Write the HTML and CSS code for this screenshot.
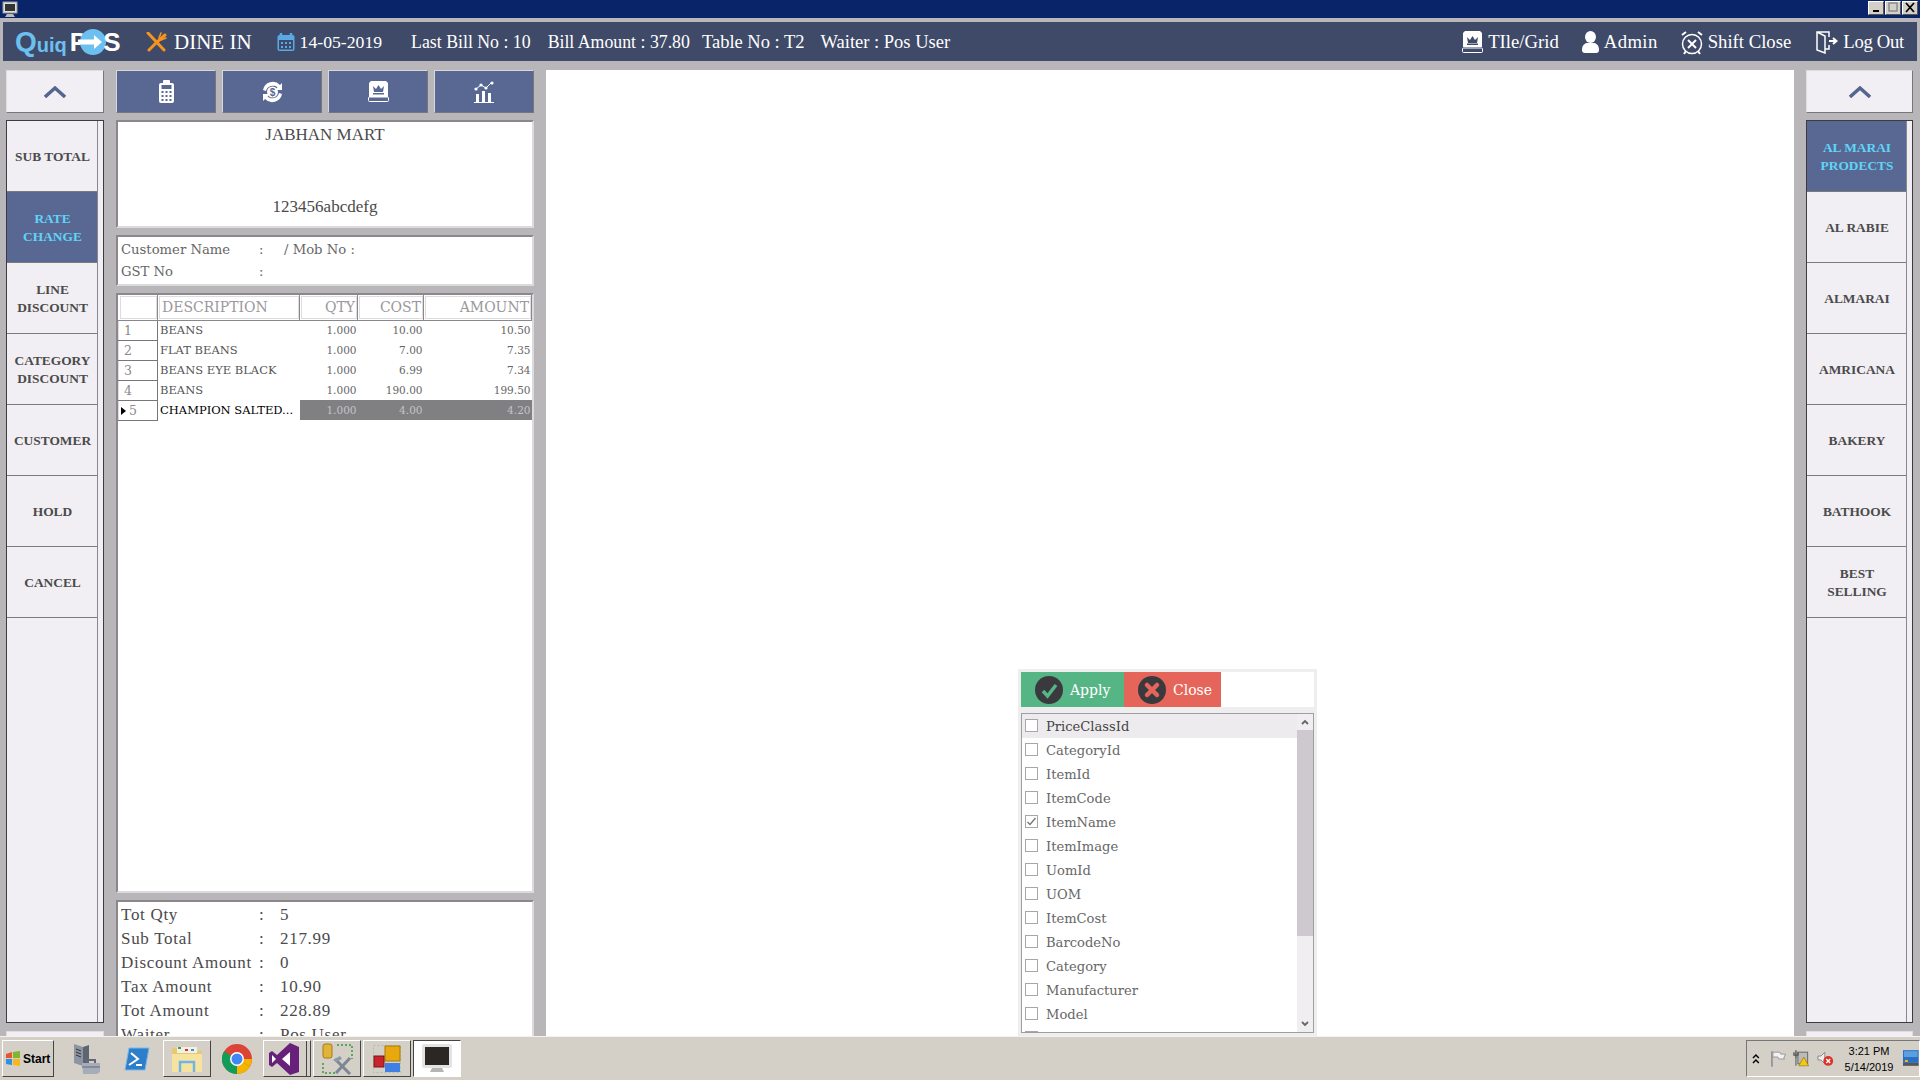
FILE: index.html
```html
<!DOCTYPE html>
<html lang="en">
<head>
    <meta charset="UTF-8">
    <title>QuiqPOS</title>
    <link rel="stylesheet" href="styles.css">
</head>
<body>
    <div class="titlebar">
        <svg class="title-icon" width="16" height="17" viewBox="0 0 16 17"><rect x="1" y="1" width="14" height="11" fill="#ddd" stroke="#999"/><rect x="3" y="3" width="10" height="7" fill="#333"/><path d="M5 13h6l2 3H3z" fill="#bbb"/></svg>
        <div class="win-buttons">
            <span class="win-btn"><svg width="14" height="11" viewBox="0 0 14 11"><rect x="4" y="8" width="6" height="2" fill="#000"/></svg></span>
            <span class="win-btn"><svg width="14" height="11" viewBox="0 0 14 11"><rect x="3" y="1" width="8" height="8" fill="none" stroke="#888" stroke-width="1.4"/></svg></span>
            <span class="win-btn"><svg width="14" height="11" viewBox="0 0 14 11"><path d="M3 1l8 9M11 1l-8 9" stroke="#000" stroke-width="1.8"/></svg></span>
        </div>
    </div>

    <header class="app-header">
        <div class="logo">
            <span class="logo-q">Q</span><span class="logo-uiq">uiq</span><span class="logo-pos">P</span>
            <svg class="logo-o" width="30" height="26" viewBox="0 0 30 26"><circle cx="15" cy="13" r="13" fill="#6cc0f0"/><path d="M0 10.500h16V6l8 7-8 7v-4.500H0z" fill="#fff"/></svg>
            <span class="logo-pos">S</span>
        </div>
        <svg class="mode-icon" width="21" height="20" viewBox="0 0 21 20" fill="none" stroke="#f7941e" stroke-width="3" stroke-linecap="round"><path d="M2 1l16 17"/><path d="M19 3l-8 7-8 8"/><path d="M15 1l-2 5M20 6l-5 2" stroke-width="1.6"/></svg>
        <span class="mode-label">DINE IN</span>
        <svg class="date-icon" width="18" height="18" viewBox="0 0 18 18"><rect x="0.500" y="2" width="17" height="16" rx="2" fill="#5aa9e6"/><rect x="2" y="7" width="14" height="9.500" fill="#3f4a68"/><path d="M4 0v4M14 0v4" stroke="#5aa9e6" stroke-width="2.500"/><path d="M4 9h2v2H4zM8 9h2v2H8zM12 9h2v2h-2zM4 13h2v2H4zM8 13h2v2H8zM12 13h2v2h-2z" fill="#5aa9e6"/></svg>
        <span class="head-date">14-05-2019</span>
        <span class="head-info first">Last Bill No : 10</span>
        <span class="head-info bill-amount">Bill Amount : 37.80</span>
        <span class="head-info table-no">Table No : T2</span>
        <span class="head-info waiter">Waiter : Pos User</span>

        <div class="head-actions">
            <span class="head-action">
                <svg width="21" height="22" viewBox="0 0 21 22"><path d="M3 0h15l2 2v14H1V2z" fill="#fff"/><path d="M5 6l3 3 2.500-4 2.500 4 3-3-1 6H6z" fill="#3f4a68"/><rect x="5" y="12.500" width="11" height="1.500" fill="#3f4a68"/><rect x="0.500" y="17" width="20" height="4.500" rx="1" fill="#3f4a68" stroke="#fff"/></svg>
                TIle/Grid
            </span>
            <span class="head-action admin">
                <svg width="17" height="22" viewBox="0 0 17 22" fill="#fff"><ellipse cx="8.500" cy="6" rx="5.500" ry="6"/><path d="M0 19c0-5 3-7 5-7h7c2 0 5 2 5 7 0 2-1 3-3 3H3c-2 0-3-1-3-3z"/></svg>
                Admin
            </span>
            <span class="head-action">
                <svg width="22" height="25" viewBox="0 0 22 25" fill="none" stroke="#fff"><circle cx="11" cy="14" r="9.500" stroke-width="1.500"/><path d="M7 10l8 8M15 10l-8 8" stroke-width="2"/><path d="M1 5l4-3M21 5l-4-3M3 24l2-3M19 24l-2-3" stroke-width="2"/></svg>
                Shift Close
            </span>
            <span class="head-action logout">
                <svg width="22" height="23" viewBox="0 0 22 23" fill="none" stroke="#fff" stroke-width="1.500"><path d="M13 6V1H1v18l8 3V5L1 1"/><path d="M9 18h4v-4"/><path d="M13 10h7M17 7l3.500 3-3.500 3" stroke-width="2"/></svg>
                Log Out
            </span>
        </div>
    </header>

    <div class="workspace">
        <!-- left rail -->
        <aside class="rail">
            <button class="up-btn"><svg width="22" height="12" viewBox="0 0 22 12" fill="none" stroke="#56658f" stroke-width="3.400"><path d="M1 11l10-9 10 9"/></svg></button>
            <div class="rail-list">
                <div class="rail-items">
                    <div class="rail-item">SUB TOTAL</div>
                    <div class="rail-item active">RATE<br>CHANGE</div>
                    <div class="rail-item">LINE<br>DISCOUNT</div>
                    <div class="rail-item">CATEGORY<br>DISCOUNT</div>
                    <div class="rail-item">CUSTOMER</div>
                    <div class="rail-item">HOLD</div>
                    <div class="rail-item">CANCEL</div>
                </div>
            </div>
            <div class="rail-stub"></div>
        </aside>

        <!-- bill column -->
        <section class="bill">
            <div class="tool-row">
                <button class="tool-btn"><svg width="15" height="23" viewBox="0 0 15 23"><rect x="0" y="3" width="15" height="20" rx="2" fill="#fff"/><rect x="4" y="0" width="7" height="4" rx="1" fill="#fff"/><rect x="2.500" y="5" width="10" height="4" fill="#596892"/><path d="M2.500 11h2v2h-2zM6.500 11h2v2h-2zM10.500 11h2v2h-2zM2.500 15h2v2h-2zM6.500 15h2v2h-2zM10.500 15h2v2h-2zM2.500 19h2v2h-2zM6.500 19h2v2h-2zM10.500 19h2v2h-2z" fill="#596892"/></svg></button>
                <button class="tool-btn"><svg width="25" height="22" viewBox="0 0 25 22"><path d="M3 9a10 10 0 0 1 17-5l2-2v7h-7l2.500-2.500A7 7 0 0 0 6 10zM22 13a10 10 0 0 1-17 5l-2 2v-7h7l-2.500 2.500A7 7 0 0 0 19 12z" fill="#fff"/><circle cx="12.500" cy="11" r="5.500" fill="#fff"/><text x="12.500" y="14.500" text-anchor="middle" class="dollar">$</text></svg></button>
                <button class="tool-btn"><svg width="21" height="21" viewBox="0 0 21 21"><path d="M3 0h15l2 2v14H1V2z" fill="#fff"/><path d="M5 5l3 3 2.500-4 2.500 4 3-3-1 6H6z" fill="#596892"/><rect x="5" y="12" width="11" height="1.500" fill="#596892"/><rect x="0.500" y="16" width="20" height="4.500" rx="1" fill="#596892" stroke="#fff"/></svg></button>
                <button class="tool-btn"><svg width="22" height="22" viewBox="0 0 22 22"><path d="M3 13h3v8H3zM9 10h3v11H9zM15 12h3v9h-3zM1 21h20v1H1z" fill="#fff"/><path d="M3 8l5-4 5 3 6-6" fill="none" stroke="#fff"/><circle cx="3" cy="8" r="1.600" fill="#fff"/><circle cx="8" cy="4" r="1.600" fill="#fff"/><circle cx="13" cy="7" r="1.600" fill="#fff"/><circle cx="19" cy="2" r="1.600" fill="#fff"/></svg></button>
            </div>

            <div class="box shop-box">
                <div>JABHAN MART</div>
                <div>123456abcdefg</div>
            </div>

            <div class="box customer-box">
                <span>Customer Name</span><span>:</span><span>/ Mob No :</span>
                <span>GST No</span><span>:</span><span></span>
            </div>

            <div class="box grid-box">
                <table class="items">
                    <thead>
                        <tr>
                            <th class="row-head"></th>
                            <th class="desc">DESCRIPTION</th>
                            <th>QTY</th>
                            <th>COST</th>
                            <th>AMOUNT</th>
                        </tr>
                    </thead>
                    <tbody>
                        <tr><td class="row-head">1</td><td class="desc">BEANS</td><td>1.000</td><td>10.00</td><td>10.50</td></tr>
                        <tr><td class="row-head">2</td><td class="desc">FLAT BEANS</td><td>1.000</td><td>7.00</td><td>7.35</td></tr>
                        <tr><td class="row-head">3</td><td class="desc">BEANS EYE BLACK</td><td>1.000</td><td>6.99</td><td>7.34</td></tr>
                        <tr><td class="row-head">4</td><td class="desc">BEANS</td><td>1.000</td><td>190.00</td><td>199.50</td></tr>
                        <tr class="selected"><td class="row-head"><span class="row-mark"></span>5</td><td class="desc">CHAMPION SALTED...</td><td>1.000</td><td>4.00</td><td>4.20</td></tr>
                    </tbody>
                </table>
            </div>

            <div class="box totals-box">
                <span>Tot Qty</span><span>:</span><span>5</span>
                <span>Sub Total</span><span>:</span><span>217.99</span>
                <span>Discount Amount</span><span>:</span><span>0</span>
                <span>Tax Amount</span><span>:</span><span>10.90</span>
                <span>Tot Amount</span><span>:</span><span>228.89</span>
                <span>Waiter</span><span>:</span><span>Pos User</span>
            </div>
        </section>

        <!-- main area with the column chooser popup -->
        <main class="canvas">
            <div class="chooser">
                <div class="chooser-bar">
                    <button class="chooser-btn apply">
                        <svg width="28" height="28" viewBox="0 0 28 28"><circle cx="14" cy="14" r="14" fill="#3a3a3e"/><path d="M8 15l4.500 5L21 9" fill="none" stroke="#55b585" stroke-width="3.500"/></svg>
                        Apply
                    </button>
                    <button class="chooser-btn close">
                        <svg width="28" height="28" viewBox="0 0 28 28"><circle cx="14" cy="14" r="14" fill="#3a3a3e"/><path d="M9 9l10 10M19 9L9 19" stroke="#e6655a" stroke-width="4.500" stroke-linecap="round"/></svg>
                        Close
                    </button>
                </div>
                <div class="chooser-list">
                    <ul class="col-list">
                        <li class="hover"><span class="check"></span>PriceClassId</li>
                        <li><span class="check"></span>CategoryId</li>
                        <li><span class="check"></span>ItemId</li>
                        <li><span class="check"></span>ItemCode</li>
                        <li><span class="check"><svg width="11" height="11" viewBox="0 0 11 11"><path d="M1.500 6l2.500 2.500L9.500 2" fill="none" stroke="#777" stroke-width="1.400"/></svg></span>ItemName</li>
                        <li><span class="check"></span>ItemImage</li>
                        <li><span class="check"></span>UomId</li>
                        <li><span class="check"></span>UOM</li>
                        <li><span class="check"></span>ItemCost</li>
                        <li><span class="check"></span>BarcodeNo</li>
                        <li><span class="check"></span>Category</li>
                        <li><span class="check"></span>Manufacturer</li>
                        <li><span class="check"></span>Model</li>
                        <li><span class="check"></span></li>
                    </ul>
                    <div class="scrollbar">
                        <span class="scroll-arrow"><svg width="8" height="6" viewBox="0 0 8 6" fill="none" stroke="#666" stroke-width="1.800"><path d="M1 5l3-3 3 3"/></svg></span>
                        <span class="scroll-thumb"></span>
                        <span class="scroll-track"></span>
                        <span class="scroll-arrow"><svg width="8" height="6" viewBox="0 0 8 6" fill="none" stroke="#666" stroke-width="1.800"><path d="M1 1l3 3 3-3"/></svg></span>
                    </div>
                </div>
            </div>
        </main>

        <!-- right rail -->
        <aside class="rail">
            <button class="up-btn"><svg width="22" height="12" viewBox="0 0 22 12" fill="none" stroke="#56658f" stroke-width="3.400"><path d="M1 11l10-9 10 9"/></svg></button>
            <div class="rail-list">
                <div class="rail-items">
                    <div class="rail-item active">AL MARAI<br>PRODECTS</div>
                    <div class="rail-item">AL RABIE</div>
                    <div class="rail-item">ALMARAI</div>
                    <div class="rail-item">AMRICANA</div>
                    <div class="rail-item">BAKERY</div>
                    <div class="rail-item">BATHOOK</div>
                    <div class="rail-item">BEST<br>SELLING</div>
                </div>
            </div>
            <div class="rail-stub"></div>
        </aside>
    </div>

    <footer class="taskbar">
        <button class="start-btn">
            <svg width="16" height="15" viewBox="0 0 16 15"><path d="M1 3l6-2v6H1z" fill="#e8552b"/><path d="M8 1l7-1v7H8z" fill="#7cb82f"/><path d="M1 8h6v6l-6-1z" fill="#2f8fe0"/><path d="M8 8h7v7l-7-1z" fill="#f7b81e"/></svg>
            Start
        </button>
        <div class="task-slot">
            <svg width="28" height="32" viewBox="0 0 28 32"><path d="M1 1l9 3v19l-9-3z" fill="#8d95a3"/><path d="M10 4l6-2v19l-6 2z" fill="#5d6573"/><path d="M3 6l5 2M3 9l5 2M3 12l5 2" stroke="#333"/><path d="M9 20h18v9l-3 2H10z" fill="#a4adb8"/><path d="M9 24h18" stroke="#667"/><path d="M14 20v-3h8v3" fill="none" stroke="#667" stroke-width="2"/></svg>
        </div>
        <div class="task-slot">
            <svg width="26" height="24" viewBox="0 0 26 24"><path d="M5 1h20l-4 22H1z" fill="#2d7fc9" stroke="#7ab8ea"/><path d="M7 6l7 6-9 6" fill="none" stroke="#fff" stroke-width="2"/><path d="M12 18h6" stroke="#fff" stroke-width="2"/></svg>
        </div>
        <div class="task-slot raised">
            <svg width="32" height="30" viewBox="0 0 32 30"><path d="M1 4h11l3 3h16v21H1z" fill="#e8c873"/><rect x="6" y="3" width="20" height="6" fill="#f3f0e4"/><path d="M7 3h3v2H7z" fill="#3fa34d"/><path d="M14 5h3v2h-3z" fill="#d9332b"/><path d="M20 5h3v2h-3z" fill="#3f8fe0"/><path d="M1 10h30v18H1z" fill="#f7e3a0"/><path d="M9 28v-10h14v10M9 18h14" fill="none" stroke="#6fb6e8" stroke-width="2.500"/></svg>
        </div>
        <div class="task-slot">
            <svg width="30" height="32" viewBox="0 0 30 30"><circle cx="15" cy="15" r="15" fill="#db4437"/><path d="M15 15L2 22.500A15 15 0 0 0 15 30z" fill="#0f9d58"/><path d="M2 22.500A15 15 0 0 1 2 7.500L15 15z" fill="#0f9d58"/><path d="M15 15l13 7.500A15 15 0 0 1 15 30z" fill="#f4b400"/><path d="M15 15h15a15 15 0 0 1-2 7.500z" fill="#f4b400"/><circle cx="15" cy="15" r="7" fill="#fff"/><circle cx="15" cy="15" r="5.500" fill="#4285f4"/></svg>
        </div>
        <div class="task-slot raised double">
            <svg class="vs-icon" width="30" height="32" viewBox="0 0 30 32"><path d="M21 0l9 4v25l-9 3-13-12-5 4-3-2V10l3-2 5 4z" fill="#68217a"/><path d="M21 9v14l-8-7zM3 12l4 4-4 4z" fill="#fff"/></svg>
        </div>
        <div class="task-slot raised">
            <svg width="32" height="32" viewBox="0 0 32 32"><rect x="2" y="1" width="9" height="14" rx="2" fill="#e2b33a" stroke="#a67c12"/><path d="M16 2h15v14M2 20v10h14" fill="none" stroke="#5aa95a" stroke-width="2" stroke-dasharray="2 2"/><path d="M14 16l15 15M29 15L15 30" stroke="#7b8794" stroke-width="3"/><path d="M12 17l7-4 2 3-6 3z" fill="#8d99a6"/></svg>
        </div>
        <div class="task-slot raised">
            <svg width="28" height="28" viewBox="0 0 28 28"><rect x="0.500" y="0.500" width="27" height="27" fill="none" stroke="#a8c49a" stroke-dasharray="2 2"/><rect x="12" y="1" width="15" height="15" fill="#e7a90e" stroke="#a97808"/><rect x="1" y="11" width="10" height="11" fill="#c8242c" stroke="#7d1519"/><rect x="12" y="18" width="15" height="9" fill="#3f7fe6"/></svg>
        </div>
        <div class="task-slot active">
            <svg width="32" height="30" viewBox="0 0 32 30"><rect x="1" y="0" width="30" height="24" rx="2" fill="#e3e3e3"/><rect x="4" y="3" width="24" height="18" fill="#2a2725"/><path d="M11 24h10l2 4H9z" fill="#b5b5b5"/></svg>
        </div>

        <div class="tray">
            <svg class="tray-chevron" width="8" height="11" viewBox="0 0 8 11" fill="none" stroke="#000" stroke-width="1.500"><path d="M1 5l3-3 3 3M1 10l3-3 3 3"/></svg>
            <svg width="17" height="16" viewBox="0 0 17 16"><path d="M2 0v16" stroke="#888" stroke-width="1.500"/><path d="M3 1h7l1 2h5l-2 4 1 1H9L8 6H3z" fill="#f2f2f2" stroke="#999"/></svg>
            <svg width="17" height="17" viewBox="0 0 17 17"><rect x="5" y="2" width="10" height="12" fill="#bbb" stroke="#666"/><path d="M3 0v8M1 2v3h4V2" fill="none" stroke="#555" stroke-width="1.400"/><path d="M3 8v8" stroke="#555"/><path d="M11 7l5 9H6z" fill="#f6c90e" stroke="#8a7000" stroke-width="0.600"/></svg>
            <svg width="17" height="16" viewBox="0 0 17 16"><path d="M1 5h3l4-4v12L4 9H1z" fill="#eee" stroke="#888"/><circle cx="11.500" cy="10" r="5" fill="#d9332b"/><path d="M9.500 8l4 4M13.500 8l-4 4" stroke="#fff" stroke-width="1.400"/></svg>
            <div class="clock">
                <span>3:21 PM</span>
                <span>5/14/2019</span>
            </div>
            <svg class="show-desktop" width="16" height="17" viewBox="0 0 16 17"><rect width="16" height="13" fill="#2a6fc0"/><rect x="1" y="1" width="14" height="6" fill="#5aa0e0"/><rect y="13" width="16" height="3" fill="#555"/><rect x="2" y="10" width="3" height="2" fill="#f7b81e"/></svg>
        </div>
    </footer>
</body>
</html>
```
FILE: styles.css
```css
* {
    box-sizing: border-box;
}
html, body {
    margin: 0;
    height: 1080px;
    overflow: hidden;
}
body {
    background: #b8b6b9;
    font-family: "Liberation Serif", serif;
    color: #4b4a4c;
    display: flex;
    flex-direction: column;
}
button {
    font-family: inherit;
    padding: 0;
    cursor: pointer;
}

/* title bar */
.titlebar {
    height: 18px;
    background: #0a246a;
    display: flex;
    justify-content: space-between;
    align-items: flex-start;
    padding: 1px 2px 0 2px;
}
.win-buttons {
    display: flex;
    gap: 1px;
}
.win-btn {
    width: 16px;
    height: 14px;
    background: #d4d0c8;
    border: 1px solid;
    border-color: #fff #555 #555 #fff;
    display: flex;
}

/* header */
.app-header {
    height: 39px;
    margin: 4px 3px 9px 3px;
    background: #3f4a68;
    color: #fff;
    display: flex;
    align-items: center;
    padding: 1px 0 0 12px;
    font-size: 17.800px;
    white-space: nowrap;
}
.logo {
    display: flex;
    align-items: center;
    width: 107px;
    font-family: "Liberation Sans", sans-serif;
    font-weight: bold;
}
.logo-q {
    color: #6cc0f0;
    font-size: 28px;
}
.logo-uiq {
    color: #6cc0f0;
    font-size: 20px;
    margin-top: 6px;
}
.logo-pos {
    font-size: 26px;
    margin-left: 3px;
}
.logo-o {
    flex: none;
    margin: 0 -8px 0 -9px;
}
.mode-icon {
    flex: none;
    margin-left: 24px;
}
.mode-label {
    font-size: 21px;
    margin-left: 7px;
}
.date-icon {
    margin-left: 25px;
}
.head-date {
    margin-left: 5px;
    font-size: 17.700px;
}
.head-info {
    margin-left: 12px;
}
.head-info.first {
    margin-left: 29px;
}
.head-info.bill-amount {
    margin-left: 17px;
}
.head-info.table-no {
    font-size: 18.500px;
}
.head-info.waiter {
    margin-left: 16px;
    font-size: 18.500px;
}
.head-actions {
    margin-left: auto;
    display: flex;
    align-items: center;
    gap: 25px;
    padding-right: 13px;
    font-size: 18.700px;
}
.head-action {
    display: flex;
    align-items: center;
    gap: 5px;
}
.head-action.admin {
    letter-spacing: 0.400px;
    margin: 0 -2px;
}
.head-action.logout {
    letter-spacing: -0.300px;
}

/* main columns */
.workspace {
    flex: 1;
    min-height: 0;
    display: grid;
    grid-template-columns: 98px 418px 1248px 107px;
    column-gap: 12px;
    padding-left: 6px;
    overflow: hidden;
}
.rail {
    display: flex;
    flex-direction: column;
    gap: 7px;
    min-height: 0;
}
.up-btn {
    height: 43px;
    flex: none;
    background: #f1eff3;
    border: 1px solid;
    border-color: #dedcdf #77767a #77767a #dedcdf;
    display: flex;
    align-items: center;
    justify-content: center;
}
.rail-list {
    flex: none;
    height: 903px;
    background: #f1eff3;
    border: 1px solid #3c3b3e;
}
.rail-items {
    width: calc(100% - 5px);
    height: 100%;
    border-right: 1px solid #8a888c;
}
.rail-item {
    height: 71px;
    border-bottom: 1px solid #7b7a7e;
    display: flex;
    align-items: center;
    justify-content: center;
    text-align: center;
    padding: 2px 0 0 1px;
    font-size: 13.400px;
    font-weight: bold;
    line-height: 18px;
}
.rail-item.active {
    background: #596892;
    color: #5fd4f7;
}
.rail-stub {
    flex: none;
    height: 20px;
    margin-top: 1px;
    background: #f1eff3;
    border: 1px solid #dedcdf;
}

/* bill column */
.bill {
    display: flex;
    flex-direction: column;
    gap: 7px;
    min-height: 0;
}
.tool-row {
    flex: none;
    height: 43px;
    display: grid;
    grid-template-columns: repeat(4, 1fr);
    column-gap: 6px;
}
.tool-btn {
    background: #596892;
    border: 1px solid;
    border-color: #d8d8dc #77767a #77767a #d8d8dc;
    display: flex;
    align-items: center;
    justify-content: center;
}
.dollar {
    font-family: "Liberation Sans", sans-serif;
    font-size: 10px;
    font-weight: bold;
    fill: #596892;
}
.box {
    flex: none;
    background: #fff;
    border: 2px solid;
    border-color: #8a888b #dcdadc #dcdadc #8a888b;
}
.shop-box {
    height: 108px;
    display: flex;
    flex-direction: column;
    align-items: center;
    justify-content: space-between;
    font-size: 17px;
    padding: 2px 0 8px 0;
    line-height: 22px;
}
.customer-box {
    height: 51px;
    display: grid;
    grid-template-columns: 138px 25px 1fr;
    grid-auto-rows: 22px;
    align-items: center;
    padding: 1px 0 0 3px;
    font-family: "DejaVu Serif", serif;
    font-size: 13.200px;
    color: #666;
}

/* items grid */
.grid-box {
    height: 600px;
    overflow: hidden;
}
.items {
    width: 100%;
    table-layout: fixed;
    border-collapse: collapse;
    font-family: "DejaVu Serif", serif;
    color: #666;
}
.items th {
    height: 25px;
    font-size: 14px;
    font-weight: normal;
    color: #9a989c;
    text-align: right;
    padding: 0 2px 0 0;
    border-right: 1px solid #8a888c;
    border-bottom: 1px solid #8a888c;
    outline: 1px solid #dedcdf;
    outline-offset: -2px;
}
.items th:nth-child(1) {
    width: 39px;
}
.items th:nth-child(2) {
    width: 142px;
}
.items th:nth-child(3) {
    width: 58px;
}
.items th:nth-child(4) {
    width: 66px;
}
.items th.desc {
    text-align: left;
    padding-left: 4px;
}
.items td {
    height: 20px;
    font-size: 10.500px;
    text-align: right;
    padding: 0 1px 0 0;
    white-space: nowrap;
    overflow: hidden;
}
.items td.desc {
    text-align: left;
    padding-left: 2px;
    font-size: 11.500px;
    color: #555;
}
.items td.row-head {
    text-align: left;
    padding-left: 5px;
    font-size: 12.500px;
    color: #8a888c;
    border: 1px solid;
    border-color: #dedcdf #77767a #77767a #dedcdf;
}
.items .selected td {
    background: #807f82;
    color: #c4c3c6;
}
.items .selected td.desc {
    background: #fff;
    color: #000;
}
.items .selected td.row-head {
    background: #fff;
    color: #8a888c;
    padding-left: 2px;
}
.row-mark {
    display: inline-block;
    border-left: 5px solid #000;
    border-top: 4px solid transparent;
    border-bottom: 4px solid transparent;
    margin-right: 3px;
}

/* totals */
.totals-box {
    height: 160px;
    display: grid;
    grid-template-columns: 138px 21px 1fr;
    grid-auto-rows: 24px;
    align-items: center;
    padding: 1px 0 0 3px;
    font-size: 17px;
    letter-spacing: 0.700px;
}

/* white area + popup */
.canvas {
    background: #fff;
    position: relative;
}
.chooser {
    position: absolute;
    left: 472px;
    top: 599px;
    bottom: 0;
    width: 299px;
    background: #eee;
    padding: 3px;
    display: flex;
    flex-direction: column;
    gap: 6px;
}
.chooser-bar {
    flex: none;
    height: 35px;
    background: #fff;
    display: flex;
}
.chooser-btn {
    border: 0;
    color: #fff;
    display: flex;
    align-items: center;
    gap: 7px;
    padding-left: 14px;
    font-family: "DejaVu Serif", serif;
    font-size: 14px;
}
.chooser-btn.apply {
    width: 103px;
    background: #55b585;
}
.chooser-btn.close {
    width: 97px;
    background: #e6655a;
}
.chooser-list {
    height: 320px;
    flex: none;
    background: #fff;
    border: 1px solid #a09ea2;
    display: flex;
    overflow: hidden;
}
.col-list {
    flex: 1;
    list-style: none;
    margin: 0;
    padding: 0;
    overflow: hidden;
    font-family: "DejaVu Serif", serif;
    font-size: 13.100px;
    color: #666;
}
.col-list li {
    height: 24px;
    display: flex;
    align-items: center;
    gap: 8px;
    padding: 0 0 0 3px;
}
.col-list li.hover {
    background: #eeebef;
    color: #444;
}
.check {
    width: 13px;
    height: 13px;
    flex: none;
    margin-bottom: 2px;
    border: 1px solid #a8a6aa;
    background: #fff;
    display: flex;
    align-items: center;
    justify-content: center;
}
.scrollbar {
    width: 16px;
    flex: none;
    background: #f0eef1;
    display: flex;
    flex-direction: column;
}
.scroll-arrow {
    height: 16px;
    flex: none;
    display: flex;
    align-items: center;
    justify-content: center;
}
.scroll-thumb {
    height: 206px;
    flex: none;
    background: #cdc9ce;
}
.scroll-track {
    flex: 1;
}

/* taskbar */
.taskbar {
    height: 44px;
    flex: none;
    background: #d4d0c8;
    border-top: 1px solid #f4f2ee;
    display: flex;
    align-items: center;
    gap: 2px;
    padding: 2px 0 2px 2px;
}
.start-btn {
    width: 52px;
    height: 37px;
    margin-right: 7px;
    background: #d4d0c8;
    border: 1px solid;
    border-color: #fff #444 #444 #fff;
    display: flex;
    align-items: center;
    gap: 2px;
    padding-left: 2px;
    font-family: "Liberation Sans", sans-serif;
    font-size: 12px;
    font-weight: bold;
    color: #000;
}
.task-slot {
    width: 48px;
    height: 37px;
    flex: none;
    display: flex;
    align-items: center;
    justify-content: center;
}
.task-slot.raised {
    border: 1px solid;
    border-color: #fff #444 #444 #fff;
}
.task-slot.double {
    box-shadow: inset -3px 0 0 #d4d0c8, inset -4px 0 0 #444;
}
.vs-icon {
    margin-right: 6px;
}
.task-slot.active {
    background: #fff;
    border: 1px solid;
    border-color: #444 #fff #fff #444;
}
.tray {
    margin-left: auto;
    width: 174px;
    height: 37px;
    flex: none;
    border: 1px solid;
    border-color: #777 #fff #fff #777;
    display: flex;
    align-items: center;
    padding-left: 5px;
    gap: 7px;
}
.tray-chevron {
    margin-right: 3px;
}
.clock {
    width: 56px;
    margin-left: 1px;
    display: flex;
    flex-direction: column;
    align-items: center;
    font-family: "Liberation Sans", sans-serif;
    font-size: 11px;
    line-height: 16px;
    color: #000;
}
.show-desktop {
    margin-left: 0;
}
```
